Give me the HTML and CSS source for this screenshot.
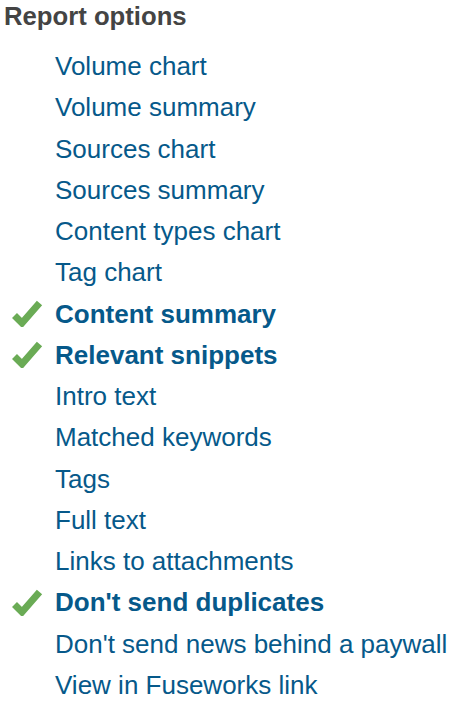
FILE: index.html
```html
<!DOCTYPE html>
<html>
<head>
<meta charset="utf-8">
<link rel="stylesheet" href="styles.css">
</head>
<body>
<h2 class="title">Report options</h2>
<ul class="options">
  <li class="opt"><span class="mark"></span><a class="label">Volume chart</a></li>
  <li class="opt"><span class="mark"></span><a class="label">Volume summary</a></li>
  <li class="opt"><span class="mark"></span><a class="label">Sources chart</a></li>
  <li class="opt"><span class="mark"></span><a class="label">Sources summary</a></li>
  <li class="opt"><span class="mark"></span><a class="label">Content types chart</a></li>
  <li class="opt"><span class="mark"></span><a class="label">Tag chart</a></li>
  <li class="opt on"><span class="mark"><svg class="check" viewBox="0 0 32 28" width="32" height="28"><path d="M3.5 16.5 L11 24 L28.5 4" fill="none" stroke="#6aab55" stroke-width="7" stroke-linecap="butt" stroke-linejoin="miter"/></svg></span><a class="label">Content summary</a></li>
  <li class="opt on"><span class="mark"><svg class="check" viewBox="0 0 32 28" width="32" height="28"><path d="M3.5 16.5 L11 24 L28.5 4" fill="none" stroke="#6aab55" stroke-width="7" stroke-linecap="butt" stroke-linejoin="miter"/></svg></span><a class="label">Relevant snippets</a></li>
  <li class="opt"><span class="mark"></span><a class="label">Intro text</a></li>
  <li class="opt"><span class="mark"></span><a class="label">Matched keywords</a></li>
  <li class="opt"><span class="mark"></span><a class="label">Tags</a></li>
  <li class="opt"><span class="mark"></span><a class="label">Full text</a></li>
  <li class="opt"><span class="mark"></span><a class="label">Links to attachments</a></li>
  <li class="opt on"><span class="mark"><svg class="check" viewBox="0 0 32 28" width="32" height="28"><path d="M3.5 16.5 L11 24 L28.5 4" fill="none" stroke="#6aab55" stroke-width="7" stroke-linecap="butt" stroke-linejoin="miter"/></svg></span><a class="label">Don't send duplicates</a></li>
  <li class="opt"><span class="mark"></span><a class="label">Don't send news behind a paywall</a></li>
  <li class="opt"><span class="mark"></span><a class="label">View in Fuseworks link</a></li>
</ul>
</body>
</html>
```
FILE: styles.css
```css
html, body {
  margin: 0;
  padding: 0;
  background: #ffffff;
}
body {
  font-family: "Liberation Sans", Arial, sans-serif;
  font-size: 26px;
}
.title {
  margin: 1px 0 0 4px;
  font-size: 25.7px;
  line-height: 30px;
  font-weight: bold;
  color: #444444;
}
.options {
  list-style: none;
  margin: 15px 0 0 0;
  padding: 0;
}
.opt {
  display: flex;
  align-items: center;
  height: 41.27px;
  line-height: 41.27px;
}
.mark {
  width: 55px;
  flex: none;
  display: flex;
  align-items: center;
}
.check {
  display: block;
  margin-left: 11px;
  margin-top: -2px;
}
.label {
  color: #06598a;
  text-decoration: none;
  white-space: nowrap;
  font-size: 26px;
}
.on .label {
  font-weight: bold;
}
```
